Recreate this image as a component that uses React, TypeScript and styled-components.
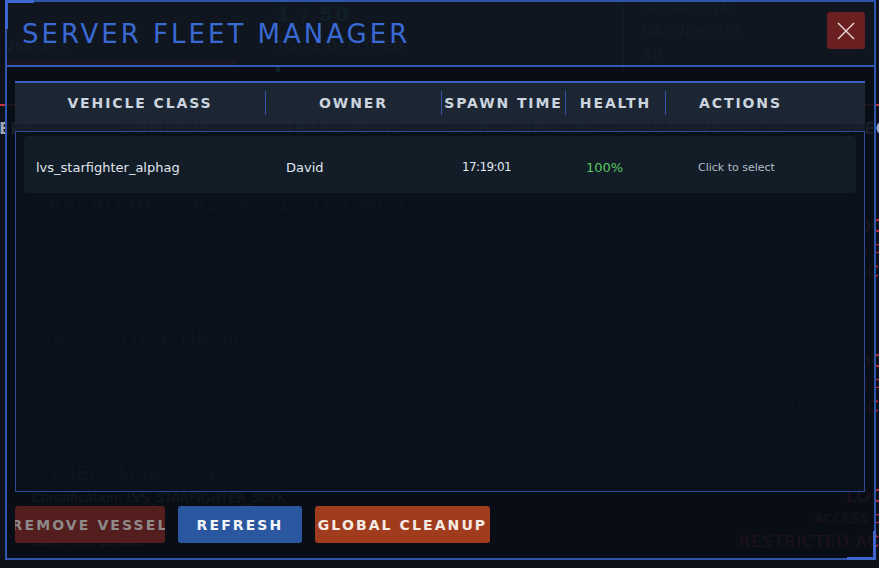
import styled, { createGlobalStyle } from 'styled-components'

const GlobalStyle = createGlobalStyle`
  html, body {
    margin: 0;
    padding: 0;
    background: #0c1018;
    overflow: hidden;
  }
  * {
    box-sizing: border-box;
  }
`

const Stage = styled.div`
  position: relative;
  width: 879px;
  height: 568px;
  overflow: hidden;
  background: #0d1119;
  font-family: "DejaVu Sans", "Liberation Sans", sans-serif;
`

/* ---------- background hangar page (seen through the modal) ---------- */

const Hangar = styled.div`
  width: 960px;
  display: flex;
  flex-direction: column;
`

const TopBar = styled.div`
  height: 68px;
  display: grid;
  grid-template-columns: 276px 348px 1fr;
`

const StatBlock = styled.div`
  display: flex;
  flex-direction: column;
  justify-content: flex-end;
  padding: 0 0 5px 5px;
  gap: 6px;
`

const StatLabel = styled.div`
  color: #8a94a4;
  font-size: 13px;
  letter-spacing: 1px;
  text-transform: uppercase;
`

const RedBar = styled.div`
  height: 7px;
  width: 232px;
  background: #c8343c;
`

const BigStat = styled.div`
  display: flex;
  flex-direction: column;
  gap: 12px;
  padding-top: 2px;
  border-right: 1px solid #2f7a4a;
`

const BigNumber = styled.div`
  color: #38c878;
  font-size: 20px;
  font-weight: bold;
  letter-spacing: 2px;
`

const GreenTick = styled.div`
  width: 4px;
  height: 7px;
  background: #38c878;
`

const InfoBlock = styled.div`
  display: flex;
  flex-direction: column;
  gap: 8px;
  padding: 2px 0 0 18px;
`

const InfoText = styled.div<{ $big?: boolean }>`
  color: #7d8898;
  font-size: ${(p) => (p.$big ? '15px' : '12px')};
  letter-spacing: 1px;
`

const Tabs = styled.div`
  margin-top: 36px;
  margin-left: -100px;
  height: 42px;
  border-top: 2px solid #c23440;
  display: flex;
`

const Tab = styled.div`
  width: 178px;
  flex: none;
  display: flex;
  align-items: flex-end;
  justify-content: center;
  padding-bottom: 8px;
  color: #a4acb8;
  font-size: 15px;
  font-weight: bold;
  letter-spacing: 1px;
`

const List = styled.div`
  padding-top: 45px;
  display: flex;
  flex-direction: column;
`

const Card = styled.div`
  height: 135px;
  padding: 0 35px 0 32px;
  display: grid;
  grid-template-columns: 1fr auto;
`

const CardInfo = styled.div`
  display: flex;
  flex-direction: column;
  gap: 4px;
`

const CardTitle = styled.div`
  color: #8a94a6;
  font-size: 20px;
  line-height: 24px;
  letter-spacing: 0.5px;
`

const CardLine = styled.div`
  color: #6c7686;
  font-size: 13px;
  line-height: 18px;
`

const LockBox = styled.div`
  display: flex;
  flex-direction: column;
  align-items: flex-end;
  padding-top: 24px;
  gap: 6px;
`

const LockText = styled.div<{ $size: number }>`
  color: #d8343e;
  font-size: ${(p) => p.$size}px;
  letter-spacing: 1px;
`

/* ---------- modal ---------- */

const Overlay = styled.div`
  position: absolute;
  inset: 0;
  padding: 0 3px 8px 5px;
  display: flex;
`

const Modal = styled.div`
  position: relative;
  flex: 1;
  display: flex;
  flex-direction: column;
  border: 2px solid #2f55ad;
  background: rgba(9, 14, 22, 0.9);

  &::before,
  &::after {
    content: '';
    position: absolute;
    width: 26px;
    height: 26px;
  }

  &::before {
    top: -2px;
    left: -2px;
    border-top: 3px solid #3d67cc;
    border-left: 3px solid #3d67cc;
  }

  &::after {
    right: -2px;
    bottom: -2px;
    border-right: 3px solid #3d67cc;
    border-bottom: 3px solid #3d67cc;
  }
`

const Header = styled.div`
  height: 65px;
  flex: none;
  display: flex;
  justify-content: space-between;
  align-items: center;
  padding: 0 9px 0 15px;
  border-bottom: 2px solid #3259b4;
  background: rgba(20, 29, 41, 0.55);
`

const Title = styled.h1`
  margin: 0;
  color: #3a69d3;
  font-size: 26px;
  font-weight: normal;
  letter-spacing: 3px;
  line-height: 1;
`

const CloseButton = styled.button`
  align-self: flex-start;
  margin-top: 10px;
  width: 38px;
  height: 37px;
  border: none;
  border-radius: 3px;
  background: #6b1f20;
  display: flex;
  align-items: center;
  justify-content: center;
  padding: 0;
  cursor: pointer;
`

const Body = styled.div`
  flex: 1;
  display: flex;
  flex-direction: column;
  gap: 14px;
  padding: 14px 9px 15px 8px;
`

const Table = styled.div`
  flex: 1;
  display: flex;
  flex-direction: column;
`

const HeadRow = styled.div`
  height: 50px;
  flex: none;
  border-top: 2px solid #3a62c2;
  background: linear-gradient(to bottom, rgba(30, 40, 54, 0.92) 0, rgba(30, 40, 54, 0.92) 41px, rgba(24, 32, 44, 0.8) 41px);
  padding-top: 8px;
  display: grid;
  grid-template-columns: 250px 176px 124px 100px 1fr;
  align-items: start;
`

const HeadCell = styled.div<{ $first?: boolean; $padRight?: number }>`
  height: 24px;
  display: flex;
  align-items: center;
  justify-content: center;
  padding-right: ${(p) => p.$padRight ?? 0}px;
  border-left: ${(p) => (p.$first ? 'none' : '1px solid #2f54a8')};
  color: #cbd4df;
  font-size: 14px;
  font-weight: bold;
  letter-spacing: 1.9px;
  white-space: nowrap;
`

const Frame = styled.div`
  flex: 1;
  border: 1px solid #2c4c98;
  background: rgba(11, 18, 28, 0.82);
  padding: 4px 8px;
`

const Row = styled.div`
  height: 57px;
  border-radius: 4px;
  background: rgba(22, 33, 46, 0.75);
  padding-top: 5px;
  display: grid;
  grid-template-columns: 250px 176px 124px 100px 1fr;
  align-items: center;
  cursor: pointer;
`

const Cell = styled.div<{ $pad?: number; $tone?: 'text' | 'good' | 'muted'; $size?: number; $tight?: boolean }>`
  padding-left: ${(p) => p.$pad ?? 12}px;
  color: ${(p) => (p.$tone === 'good' ? '#58c85c' : p.$tone === 'muted' ? '#b5bcc5' : '#e0e6ee')};
  font-size: ${(p) => p.$size ?? 13}px;
  letter-spacing: ${(p) => (p.$tight ? '-0.6px' : '0')};
  white-space: nowrap;
`

const Actions = styled.div`
  display: flex;
  gap: 13px;
`

const ActionButton = styled.button<{ $variant: 'danger' | 'primary' | 'warning'; $width: number }>`
  width: ${(p) => p.$width}px;
  height: 37px;
  flex: none;
  border: none;
  border-radius: 3px;
  display: flex;
  align-items: center;
  justify-content: center;
  overflow: hidden;
  padding: 0;
  white-space: nowrap;
  font-family: "DejaVu Sans", sans-serif;
  font-size: 14px;
  font-weight: bold;
  letter-spacing: 2.1px;
  background: ${(p) =>
    p.$variant === 'danger' ? '#541d1e' : p.$variant === 'primary' ? '#2a57a0' : '#a03c1d'};
  color: ${(p) =>
    p.$variant === 'danger' ? '#8e8a8a' : p.$variant === 'primary' ? '#f2f4f8' : '#f6ebe4'};
  cursor: pointer;

  &:disabled {
    cursor: default;
  }
`

const vehicles = [
  { name: 'GAR: ALPHA-CLASS XG-1 STAR WING', id: 'LVS_STARFIGHTER_ALPHAG', cost: 450 },
  { name: 'CIS: VULTURE DROID', id: 'LVS_STARFIGHTER_VULTUREDROID', cost: 200 },
  { name: 'OTHER: M3A SCYK', id: 'LVS_STARFIGHTER_SCYK', cost: 375 },
]

const tabs = ['FIGHTERS', 'BOMBERS', 'TRANSPORTS', 'LIGHT VEHICLES', 'GROUND VEHICLES', 'SPECIAL']

const CloseIcon = () => (
  <svg width="18" height="18" viewBox="0 0 18 18">
    <path d="M1 1 L17 17 M17 1 L1 17" stroke="#eadcdc" strokeWidth="1.4" fill="none" />
  </svg>
)

export default function App() {
  return (
    <Stage>
      <GlobalStyle />
      <Hangar>
        <TopBar>
          <StatBlock>
            <StatLabel>Vessels</StatLabel>
            <RedBar />
          </StatBlock>
          <BigStat>
            <BigNumber>1 / 50</BigNumber>
            <StatLabel>Total Deployed</StatLabel>
            <GreenTick />
          </BigStat>
          <InfoBlock>
            <InfoText>OPERATIONAL</InfoText>
            <InfoText>MAX VEHICLES</InfoText>
            <InfoText $big>50</InfoText>
          </InfoBlock>
        </TopBar>
        <Tabs>
          {tabs.map((t) => (
            <Tab key={t}>{t}</Tab>
          ))}
        </Tabs>
        <List>
          {vehicles.map((v) => (
            <Card key={v.id}>
              <CardInfo>
                <CardTitle>{v.name}</CardTitle>
                <CardLine>Classification: {v.id}</CardLine>
                <CardLine>Type: FIGHTERS</CardLine>
                <CardLine>Cost: {v.cost} Credits</CardLine>
              </CardInfo>
              <LockBox>
                <LockText $size={18}>LOCKED</LockText>
                <LockText $size={12}>ACCESS DENIED</LockText>
                <LockText $size={16}>RESTRICTED ACCESS</LockText>
              </LockBox>
            </Card>
          ))}
        </List>
      </Hangar>

      <Overlay>
        <Modal>
          <Header>
            <Title>SERVER FLEET MANAGER</Title>
            <CloseButton aria-label="Close">
              <CloseIcon />
            </CloseButton>
          </Header>
          <Body>
            <Table>
              <HeadRow>
                <HeadCell $first>VEHICLE CLASS</HeadCell>
                <HeadCell>OWNER</HeadCell>
                <HeadCell>SPAWN TIME</HeadCell>
                <HeadCell>HEALTH</HeadCell>
                <HeadCell $padRight={50}>ACTIONS</HeadCell>
              </HeadRow>
              <Frame>
                <Row>
                  <Cell>lvs_starfighter_alphag</Cell>
                  <Cell>David</Cell>
                  <Cell $size={12} $tight>17:19:01</Cell>
                  <Cell $tone="good">100%</Cell>
                  <Cell $pad={24} $tone="muted" $size={11}>Click to select</Cell>
                </Row>
              </Frame>
            </Table>
            <Actions>
              <ActionButton $variant="danger" $width={150} disabled>REMOVE VESSEL</ActionButton>
              <ActionButton $variant="primary" $width={124}>REFRESH</ActionButton>
              <ActionButton $variant="warning" $width={175}>GLOBAL CLEANUP</ActionButton>
            </Actions>
          </Body>
        </Modal>
      </Overlay>
    </Stage>
  )
}
